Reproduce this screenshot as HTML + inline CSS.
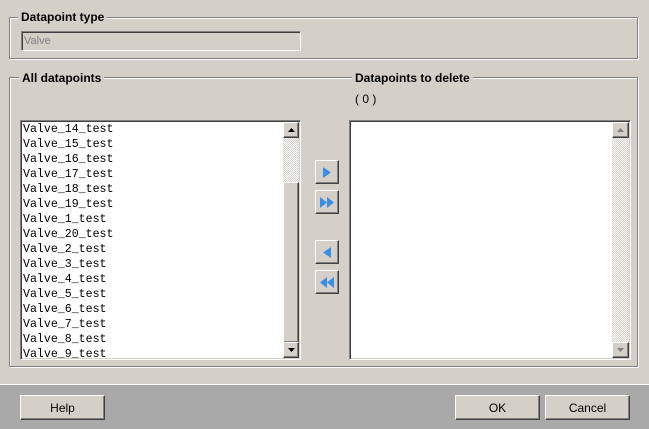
<!DOCTYPE html>
<html><head><meta charset="utf-8">
<style>
*{box-sizing:border-box;margin:0;padding:0}
body{width:649px;height:429px;background:#d4d0c8;position:relative;overflow:hidden;font-family:"Liberation Sans",sans-serif;font-size:12px;color:#000}
.abs{position:absolute}
.grp{position:absolute;border:1px solid #808080;box-shadow:1px 1px 0 #fff,inset 1px 1px 0 #fff}
.lbl{position:absolute;background:#d4d0c8;font-weight:bold;font-size:12px;padding:0 3px;line-height:14px}
.sunk{position:absolute;background:#fff;border-top:1px solid #808080;border-left:1px solid #808080;border-right:1px solid #fff;border-bottom:1px solid #fff;box-shadow:inset 1px 1px 0 #404040,inset -1px -1px 0 #d4d0c8}
.btn{position:absolute;background:#d4d0c8;border-top:1px solid #fff;border-left:1px solid #fff;border-right:1px solid #404040;border-bottom:1px solid #404040;box-shadow:inset -1px -1px 0 #808080;display:flex;align-items:center;justify-content:center}
.chk{background-color:#fff;background-image:repeating-conic-gradient(#d4d0c8 0 25%,#fff 0 50%);background-size:2px 2px}
.clip{position:absolute;left:22px;top:122px;width:261px;height:236px;overflow:hidden}
.rows{position:absolute;left:1px;top:0px;font-family:"Liberation Mono",monospace;font-size:11.6px;line-height:15px;white-space:nowrap}
</style></head><body>
<div class="grp" style="left:9px;top:17px;width:629px;height:42px"></div>
<div class="lbl" style="left:18px;top:10px">Datapoint type</div>
<div class="sunk" style="left:21px;top:31px;width:280px;height:20px;background:#d4d0c8"></div>
<div class="abs" style="left:24px;top:35px;font-size:11px;color:#808080">Valve</div>

<div class="grp" style="left:9px;top:77px;width:629px;height:290px"></div>
<div class="lbl" style="left:19px;top:71px">All datapoints</div>
<div class="lbl" style="left:352px;top:71px">Datapoints to delete</div>
<div class="abs" style="left:355px;top:92px;font-size:12px">( 0 )</div>

<div class="sunk" style="left:20px;top:120px;width:281px;height:240px"></div>
<div class="clip"><div class="rows">Valve_14_test<br>Valve_15_test<br>Valve_16_test<br>Valve_17_test<br>Valve_18_test<br>Valve_19_test<br>Valve_1_test<br>Valve_20_test<br>Valve_2_test<br>Valve_3_test<br>Valve_4_test<br>Valve_5_test<br>Valve_6_test<br>Valve_7_test<br>Valve_8_test<br>Valve_9_test</div></div>
<div class="abs chk" style="left:283px;top:122px;width:16px;height:236px"></div>
<div class="btn" style="left:283px;top:122px;width:16px;height:16px"><svg width="7" height="4"><path d="M3.5 0L7 4H0Z" fill="#000"/></svg></div>
<div class="btn" style="left:283px;top:182px;width:16px;height:161px"></div>
<div class="btn" style="left:283px;top:342px;width:16px;height:16px"><svg width="7" height="4"><path d="M0 0H7L3.5 4Z" fill="#000"/></svg></div>

<div class="sunk" style="left:349px;top:120px;width:282px;height:240px"></div>
<div class="abs chk" style="left:612px;top:122px;width:17px;height:236px"></div>
<div class="btn" style="left:612px;top:122px;width:17px;height:16px"><svg width="7" height="4"><path d="M3.5 0L7 4H0Z" fill="#808080"/></svg></div>
<div class="btn" style="left:612px;top:342px;width:17px;height:16px"><svg width="7" height="4"><path d="M0 0H7L3.5 4Z" fill="#808080"/></svg></div>

<div class="btn" style="left:315px;top:160px;width:24px;height:24px"><svg width="8" height="11"><path d="M0 0L8 5.5L0 11Z" fill="#3a8ee6"/></svg></div>
<div class="btn" style="left:315px;top:190px;width:24px;height:24px"><svg width="14" height="11"><path d="M0 0L7 5.5L0 11Z M7 0L14 5.5L7 11Z" fill="#3a8ee6"/></svg></div>
<div class="btn" style="left:315px;top:240px;width:24px;height:24px"><svg width="8" height="11"><path d="M8 0L0 5.5L8 11Z" fill="#3a8ee6"/></svg></div>
<div class="btn" style="left:315px;top:270px;width:24px;height:24px"><svg width="14" height="11"><path d="M7 0L0 5.5L7 11Z M14 0L7 5.5L14 11Z" fill="#3a8ee6"/></svg></div>

<div class="abs" style="left:0;top:384px;width:649px;height:45px;background:#a9a9a9;border-top:1px solid #fff"></div>
<div class="btn" style="left:20px;top:395px;width:85px;height:25px">Help</div>
<div class="btn" style="left:455px;top:395px;width:85px;height:25px">OK</div>
<div class="btn" style="left:545px;top:395px;width:85px;height:25px">Cancel</div>
</body></html>
